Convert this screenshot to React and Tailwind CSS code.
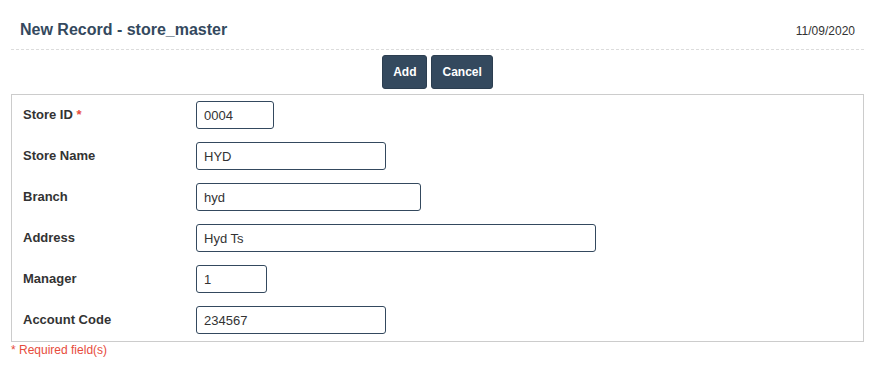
export default function App() {
  const rows = [
    { label: "Store ID", req: true, value: "0004", w: "w-[78px]" },
    { label: "Store Name", value: "HYD", w: "w-[190px]" },
    { label: "Branch", value: "hyd", w: "w-[225px]" },
    { label: "Address", value: "Hyd Ts", w: "w-[400px]" },
    { label: "Manager", value: "1", w: "w-[71px]" },
    { label: "Account Code", value: "234567", w: "w-[190px]" },
  ];
  return (
    <div className="w-[878px] h-[373px] bg-white" style={{ fontFamily: '"Liberation Sans", Arial, sans-serif' }}>
      <div className="ml-[11px] w-[853px]">
        <div className="flex items-baseline justify-between px-[9px] pt-[21px] pb-[10px] border-b border-dashed border-[#dcdcdc]">
          <div className="text-[16px] leading-[18px] font-bold text-[#34495e]">New Record - store_master</div>
          <div className="text-[12px] leading-[14px] text-[#333]">11/09/2020</div>
        </div>
        <div className="flex justify-center gap-[4px] pt-[5px] pb-[5px]">
          <button className="h-[34px] px-[10px] rounded-[3px] bg-[#34495e] border border-[#2c3e50] text-white text-[12px] font-bold">Add</button>
          <button className="h-[34px] px-[10px] rounded-[3px] bg-[#34495e] border border-[#2c3e50] text-white text-[12px] font-bold">Cancel</button>
        </div>
        <div className="border border-[#cccccc] pt-[6px] pb-[7px] pl-[11px] flex flex-col gap-[13px]">
          {rows.map((r) => (
            <div key={r.label} className="flex items-center">
              <div className="w-[173px] text-[13px] font-bold text-[#333]">
                {r.label}
                {r.req && <span className="text-[#e74c3c]"> *</span>}
              </div>
              <input
                readOnly
                value={r.value}
                className={`${r.w} h-[28px] border border-[#34495e] rounded-[3px] px-[7px] text-[13px] text-[#333] outline-none`}
                style={{ fontFamily: '"Liberation Sans", Arial, sans-serif' }}
              />
            </div>
          ))}
        </div>
        <div className="pt-[1px] text-[12px] leading-[14px] text-[#e74c3c]">* Required field(s)</div>
      </div>
    </div>
  );
}
